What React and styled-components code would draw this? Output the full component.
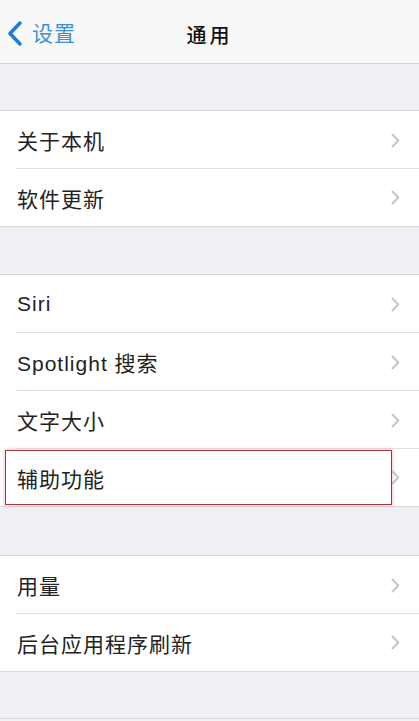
import React from "react";
import styled, { createGlobalStyle } from "styled-components";

const GlobalStyle = createGlobalStyle`
  html, body {
    margin: 0;
    padding: 0;
    background: #efeff4;
  }
  body {
    font-family: "Liberation Sans", "Noto Sans CJK SC", sans-serif;
    -webkit-font-smoothing: antialiased;
  }
`;

const Page = styled.div`
  width: 419px;
  min-height: 721px;
  background: #efeff4;
  overflow: hidden;
`;

// top navigation bar
const NavBar = styled.header`
  position: relative;
  height: 64px;
  background: #f8f8f8;
  border-bottom: 1px solid #cfcfd4;
  display: flex;
  align-items: center;
  justify-content: center;
  padding-top: 5px;
  box-sizing: border-box;
`;

const BackButton = styled.div`
  position: absolute;
  left: 7px;
  top: 21px;
  display: flex;
  align-items: center;
  gap: 9px;
  color: #3a8fdb;
  font-size: 21px;
  letter-spacing: 1px;
  line-height: 24px;
`;

const Title = styled.h1`
  margin: 0;
  font-size: 20px;
  font-weight: 500;
  letter-spacing: 3px;
  color: #111;
`;

// a grouped list section
const Group = styled.section`
  margin-top: ${(p) => p.$gap}px;
  background: #fff;
  border-top: 1px solid #d8d8dc;
  border-bottom: 1px solid #d8d8dc;
`;

const Row = styled.div`
  position: relative;
  height: 58px;
  display: flex;
  align-items: center;
  justify-content: space-between;
  padding-left: 17px;
  padding-right: 19px;
  box-sizing: border-box;

  &:not(:last-child)::after {
    content: "";
    position: absolute;
    left: 16px;
    right: 0;
    bottom: 0;
    height: 1px;
    background: #e0e0e4;
  }
  &:last-child {
    height: 57px;
  }
`;

const Label = styled.span`
  font-size: 21px;
  letter-spacing: 1px;
  color: #222;
`;

const Highlight = styled.div`
  position: absolute;
  left: 5px;
  top: 1px;
  width: 387px;
  height: 55px;
  box-sizing: border-box;
  border: 1.5px solid #a3383c;
  box-shadow: 0 0 3px 1px rgba(240, 140, 150, 0.45);
  pointer-events: none;
`;

const Footer = styled.div`
  margin-top: 46px;
  height: 10px;
  border-top: 1px solid #dcdce0;
  background: #f2f2f5;
`;

const Chevron = () => (
  <svg width="9" height="15" viewBox="0 0 9 15">
    <path d="M1.5 1.5 L7.3 7.5 L1.5 13.5" fill="none" stroke="#c5c5ca" strokeWidth="2" strokeLinecap="round" strokeLinejoin="round" />
  </svg>
);

const BackChevron = () => (
  <svg width="16" height="25" viewBox="0 0 16 25">
    <path d="M13 2 L3 12.5 L13 23" fill="none" stroke="#1f7ad6" strokeWidth="3.4" strokeLinecap="round" strokeLinejoin="round" />
  </svg>
);

const groups = [
  { gap: 46, items: ["关于本机", "软件更新"] },
  { gap: 47, items: ["Siri", "Spotlight 搜索", "文字大小", "辅助功能"] },
  { gap: 48, items: ["用量", "后台应用程序刷新"] },
];

export default function App() {
  return (
    <Page>
      <GlobalStyle />
      <NavBar>
        <BackButton>
          <BackChevron />
          <span>设置</span>
        </BackButton>
        <Title>通用</Title>
      </NavBar>
      {groups.map((g, i) => (
        <Group key={i} $gap={g.gap}>
          {g.items.map((label) => (
            <Row key={label}>
              <Label>{label}</Label>
              <Chevron />
              {label === "辅助功能" && <Highlight />}
            </Row>
          ))}
        </Group>
      ))}
      <Footer />
    </Page>
  );
}
